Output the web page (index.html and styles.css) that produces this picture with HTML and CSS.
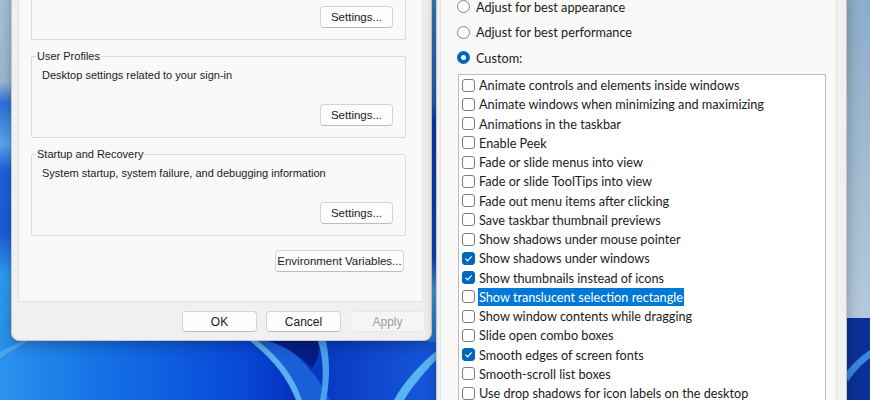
FILE: index.html
```html
<!DOCTYPE html>
<html lang="en">
<head>
    <meta charset="UTF-8">
    <meta name="viewport" content="width=device-width, initial-scale=1.0">
    <title>System Properties - Performance Options</title>
    <link rel="stylesheet" href="styles.css">
</head>
<body>
<div class="desktop">
    <!-- Windows 11 bloom wallpaper, roughly -->
    <svg class="wallpaper" width="870" height="400" viewBox="0 0 870 400">
        <defs>
            <linearGradient id="wpBottom" x1="0" y1="0" x2="1" y2="0">
                <stop offset="0" stop-color="#2a92ec"/>
                <stop offset="0.12" stop-color="#1470e6"/>
                <stop offset="0.28" stop-color="#0848d8"/>
                <stop offset="0.34" stop-color="#0532bc"/>
                <stop offset="0.5" stop-color="#1658dc"/>
                <stop offset="1" stop-color="#0a3aa8"/>
            </linearGradient>
            <linearGradient id="wpLeft" x1="0" y1="0" x2="0" y2="1">
                <stop offset="0" stop-color="#a9c2d6"/>
                <stop offset="0.24" stop-color="#9cb8d0"/>
                <stop offset="0.3" stop-color="#2c72da"/>
                <stop offset="0.42" stop-color="#5aa6ee"/>
                <stop offset="0.5" stop-color="#1c62dc"/>
                <stop offset="0.68" stop-color="#1a5cd8"/>
                <stop offset="0.8" stop-color="#2c9cf0"/>
                <stop offset="1" stop-color="#2a92ec"/>
            </linearGradient>
            <linearGradient id="wpGap" x1="0" y1="0" x2="0" y2="1">
                <stop offset="0" stop-color="#3c86cc"/>
                <stop offset="0.3" stop-color="#2a66c8"/>
                <stop offset="0.36" stop-color="#0c3cc4"/>
                <stop offset="0.75" stop-color="#1448cc"/>
                <stop offset="0.85" stop-color="#4aa6ee"/>
                <stop offset="1" stop-color="#2a7ee4"/>
            </linearGradient>
            <linearGradient id="wpSky" x1="0" y1="0" x2="0" y2="1">
                <stop offset="0" stop-color="#8dadc8"/>
                <stop offset="1" stop-color="#b4c9da"/>
            </linearGradient>
        </defs>
        <rect width="870" height="400" fill="url(#wpBottom)"/>
        <rect x="0" y="0" width="14" height="342" fill="url(#wpLeft)"/>
        <rect x="428" y="0" width="12" height="342" fill="url(#wpGap)"/>
        <path d="M0 352 L22 341 L28 341 L0 358 Z" fill="#62b4f2" opacity="0.6"/>
        <path d="M250 341 C272 358 288 378 296 400 L330 400 C316 372 296 352 276 341 Z" fill="#1a5ed8"/>
        <path d="M250 341 C272 358 288 378 296 400 L302 400 C294 376 278 356 258 341 Z" fill="#5ab0f0"/>
        <path d="M268 341 L318 341 C320 352 318 360 312 368 C300 356 286 346 268 341 Z" fill="#051c86"/>
        <path d="M318 341 C324 360 324 382 320 400 L326 400 C330 380 330 360 326 341 Z" fill="#4aa0ee"/>
        <path d="M440 348 C420 364 404 382 394 400 L404 400 C414 384 428 368 440 356 Z" fill="#5ab4f2"/>
        <rect x="846" y="0" width="24" height="318" fill="url(#wpSky)"/>
        <path d="M846 318 L870 318 L870 400 L846 400 Z" fill="#0a3098"/>
        <path d="M846 372 C856 360 864 354 870 350 L870 358 C862 364 854 372 848 382 Z" fill="#3a86e0"/>
    </svg>

    <div class="window sysprops">
        <div class="tab-page">
            <fieldset class="group group-first">
                <div class="group-actions"><button class="btn btn-settings">Settings...</button></div>
            </fieldset>
            <fieldset class="group">
                <legend>User Profiles</legend>
                <p class="group-desc">Desktop settings related to your sign-in</p>
                <div class="group-actions"><button class="btn btn-settings">Settings...</button></div>
            </fieldset>
            <fieldset class="group">
                <legend>Startup and Recovery</legend>
                <p class="group-desc">System startup, system failure, and debugging information</p>
                <div class="group-actions"><button class="btn btn-settings">Settings...</button></div>
            </fieldset>
            <div class="env-row"><button class="btn btn-wide">Environment Variables...</button></div>
        </div>
        <div class="dialog-buttons">
            <button class="btn btn-dlg">OK</button>
            <button class="btn btn-dlg">Cancel</button>
            <button class="btn btn-dlg" disabled>Apply</button>
        </div>
    </div>

    <div class="window perfopts">
        <div class="tab-page">
            <div class="radio"><span class="radio-dot"></span>Adjust for best appearance</div>
            <div class="radio"><span class="radio-dot"></span>Adjust for best performance</div>
            <div class="radio"><span class="radio-dot on"></span>Custom:</div>

            <ul class="effects">
                <li><span class="check"></span>Animate controls and elements inside windows</li>
                <li><span class="check"></span>Animate windows when minimizing and maximizing</li>
                <li><span class="check"></span>Animations in the taskbar</li>
                <li><span class="check"></span>Enable Peek</li>
                <li><span class="check"></span>Fade or slide menus into view</li>
                <li><span class="check"></span>Fade or slide ToolTips into view</li>
                <li><span class="check"></span>Fade out menu items after clicking</li>
                <li><span class="check"></span>Save taskbar thumbnail previews</li>
                <li><span class="check"></span>Show shadows under mouse pointer</li>
                <li><span class="check on"><svg width="11" height="11" viewBox="0 0 11 11"><polyline points="2.5,5.8 4.6,7.8 8.6,3.4" fill="none" stroke="#fff" stroke-width="1.2"/></svg></span>Show shadows under windows</li>
                <li><span class="check on"><svg width="11" height="11" viewBox="0 0 11 11"><polyline points="2.5,5.8 4.6,7.8 8.6,3.4" fill="none" stroke="#fff" stroke-width="1.2"/></svg></span>Show thumbnails instead of icons</li>
                <li><span class="check"></span><span class="selected">Show translucent selection rectangle</span></li>
                <li><span class="check"></span>Show window contents while dragging</li>
                <li><span class="check"></span>Slide open combo boxes</li>
                <li><span class="check on"><svg width="11" height="11" viewBox="0 0 11 11"><polyline points="2.5,5.8 4.6,7.8 8.6,3.4" fill="none" stroke="#fff" stroke-width="1.2"/></svg></span>Smooth edges of screen fonts</li>
                <li><span class="check"></span>Smooth-scroll list boxes</li>
                <li><span class="check"></span>Use drop shadows for icon labels on the desktop</li>
            </ul>
        </div>
    </div>
</div>
</body>
</html>
```

FILE: styles.css
```css
body {
    margin: 0;
    font-family: "Liberation Sans", Arial, sans-serif;
    color: #1b1b1b;
    overflow: hidden;
}
.desktop {
    position: relative;
    width: 870px;
    height: 400px;
    overflow: hidden;
    background-color: #1558dc;
}
.wallpaper {
    position: absolute;
    left: 0;
    top: 0;
}

/* dialog windows */
.window {
    position: absolute;
    box-sizing: border-box;
    display: flex;
    flex-direction: column;
    background-color: #f0f0f0;
    border: 1px solid #c6c6c6;
    border-radius: 8px;
    box-shadow: 0 4px 14px rgba(0,0,0,0.28);
}
.tab-page {
    box-sizing: border-box;
    background-color: #f9f9f9;
    border: 1px solid #e2e2e2;
}
p {
    margin: 0;
}

/* System Properties */
.sysprops {
    left: 11px;
    top: -160px;
    width: 421px;
    height: 501px;
    font-size: 11px;
}
.sysprops .tab-page {
    flex: 1;
    display: flex;
    flex-direction: column;
    justify-content: flex-end;
    margin: 0 8px 0 6px;
    padding: 0 16px 29px 12px;
    overflow: hidden;
}
.group {
    margin: 0;
    padding: 0 0 11px;
    border: 1px solid #dadada;
    border-radius: 2px;
    min-width: 0;
}
.group-first {
    padding-top: 40px;
}
.group + .group {
    margin-top: 9px;
}
.group legend {
    margin-left: 4px;
    padding: 0 1px;
    line-height: 14px;
}
.group-desc {
    margin: 5px 0 0 10px;
    line-height: 14px;
}
.group-actions {
    display: flex;
    justify-content: flex-end;
    margin-top: 22px;
    padding-right: 12px;
}
.env-row {
    display: flex;
    justify-content: flex-end;
    margin-top: 14px;
    padding-right: 2px;
}
.dialog-buttons {
    display: flex;
    justify-content: flex-end;
    gap: 9px;
    height: 38px;
    box-sizing: border-box;
    padding: 9px 6px 0 0;
}

.btn {
    box-sizing: border-box;
    height: 22px;
    padding: 0;
    font-family: "Liberation Sans", Arial, sans-serif;
    font-size: 11.5px;
    color: #1b1b1b;
    background-color: #fdfdfd;
    border: 1px solid #d4d4d4;
    border-bottom-color: #bdbdbd;
    border-radius: 4px;
}
.btn-settings {
    width: 73px;
}
.btn-wide {
    width: 129px;
}
.btn-dlg {
    width: 75px;
    height: 21px;
    font-size: 12px;
}
.btn:disabled {
    color: #9d9d9d;
    background-color: #f5f5f5;
    border-color: #e9e9e9;
}

/* Performance Options */
.perfopts {
    left: 436px;
    top: -8px;
    width: 411px;
    height: 460px;
    font-family: Lato, "Noto Sans", sans-serif;
    font-size: 12.7px;
}
.perfopts .tab-page {
    flex: 1;
    margin: 0 9px 0 3px;
    padding: 0 0 0 16px;
}
.radio {
    display: flex;
    align-items: center;
    gap: 6px;
    height: 25.5px;
    white-space: nowrap;
}
.radio-dot {
    box-sizing: border-box;
    width: 13px;
    height: 13px;
    border: 1px solid #858585;
    border-radius: 50%;
    background-color: #fdfdfd;
}
.radio-dot.on {
    border: 4px solid #0067c0;
    background-color: #fff;
}
.effects {
    list-style: none;
    box-sizing: border-box;
    width: 368px;
    height: 340px;
    margin: 3px 0 0 1px;
    padding: 1px 0 0 3px;
    background-color: #fff;
    border: 1px solid #bcbcbc;
}
.effects li {
    display: flex;
    align-items: center;
    gap: 4px;
    height: 19.25px;
    white-space: nowrap;
}
.check {
    box-sizing: border-box;
    flex: none;
    width: 13px;
    height: 13px;
    border: 1px solid #7d7d7d;
    border-radius: 3px;
    background-color: #fdfdfd;
    display: flex;
    align-items: center;
    justify-content: center;
}
.check.on {
    background-color: #0067c0;
    border-color: #0067c0;
}
.selected {
    margin-left: -1px;
    padding: 0 1px;
    line-height: 18px;
    color: #fff;
    background-color: #0078d7;
}
```
